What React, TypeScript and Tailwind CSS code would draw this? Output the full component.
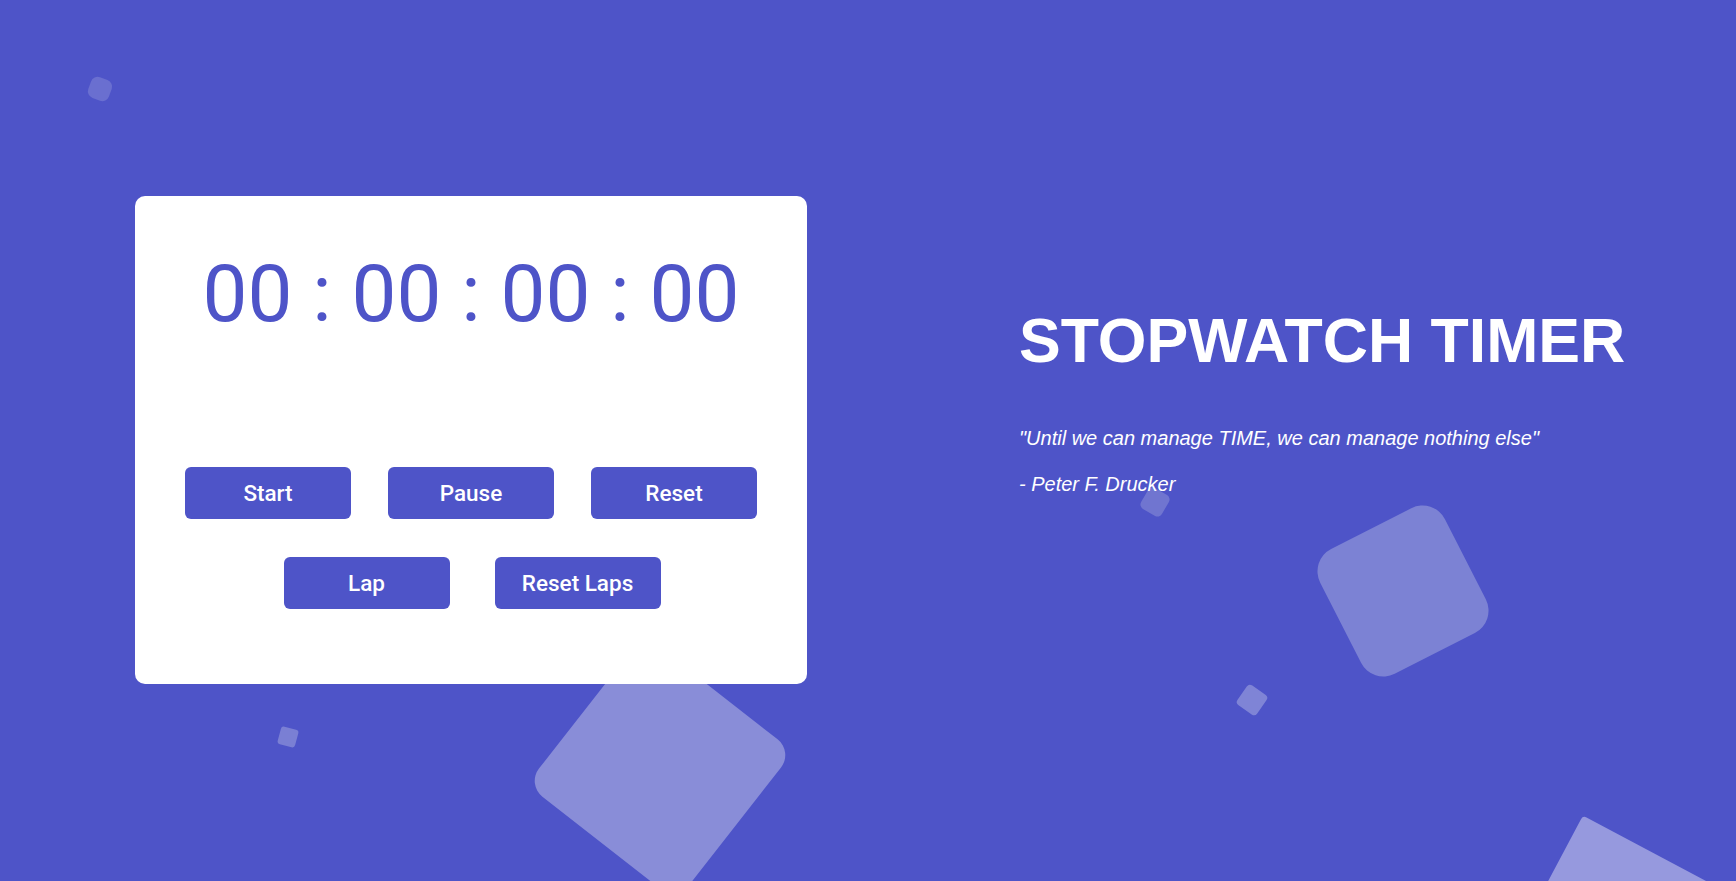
import React from "react";

const buttonCls =
  "w-[166px] h-[52px] rounded-[6px] bg-[#4e54c8] text-white text-[22.5px] font-medium leading-none flex items-center justify-center";

export default function App() {
  return (
    <div className="relative w-full h-[881px] overflow-hidden bg-[#4e54c8] font-['Roboto',sans-serif]">
      {/* background squares */}
      <div className="absolute inset-0">
        <div className="absolute left-[89px] top-[78px] w-[22px] h-[22px] rotate-[20deg] rounded-[7px] bg-[#6a6fd0]" />
        <div className="absolute left-[565px] top-[673px] w-[190px] h-[190px] rotate-[38deg] rounded-[20px] bg-[#898dd8]" />
        <div className="absolute left-[1333px] top-[521px] w-[140px] h-[140px] rotate-[63deg] rounded-[25px] bg-[#7c82d4]" />
        <div className="absolute left-[1240px] top-[688px] w-[24px] h-[24px] rotate-[35deg] rounded-[4px] bg-[#7f84d6]" />
        <div className="absolute left-[279px] top-[728px] w-[18px] h-[18px] rotate-[15deg] rounded-[3px] bg-[#7a7fd4]" />
        <div className="absolute left-[1143px] top-[490px] w-[24px] h-[24px] rotate-[30deg] rounded-[5px] bg-[#7075d0]" />
        <div className="absolute left-[1539px] top-[842px] w-[150px] h-[150px] rotate-[28deg] rounded-[4px] bg-[#9699de]" />
      </div>

      <div className="relative z-10 flex">
        {/* card */}
        <div className="ml-[135px] mt-[196px] w-[672px] h-[488px] bg-white rounded-[10px] flex flex-col items-center pt-[50px]">
          <div className="text-[80px] leading-[96px] font-normal text-[#4e54c8] whitespace-pre">
            00 : 00 : 00 : 00
          </div>
          <div className="mt-[125px] flex gap-[37px]">
            <button className={buttonCls}>Start</button>
            <button className={buttonCls}>Pause</button>
            <button className={buttonCls}>Reset</button>
          </div>
          <div className="mt-[38px] flex gap-[45px] pl-[2px]">
            <button className={buttonCls}>Lap</button>
            <button className={buttonCls}>Reset Laps</button>
          </div>
        </div>

        {/* text column */}
        <div className="ml-[212px] mt-[304px] flex flex-col text-white font-['Liberation_Sans',Arial,sans-serif]">
          <h1 className="text-[62.6px] leading-[72px] font-bold">STOPWATCH TIMER</h1>
          <p className="mt-[50px] text-[20px] leading-[24px] italic">
            "Until we can manage TIME, we can manage nothing else"
          </p>
          <p className="mt-[22px] text-[20px] leading-[24px] italic">- Peter F. Drucker</p>
        </div>
      </div>
    </div>
  );
}
